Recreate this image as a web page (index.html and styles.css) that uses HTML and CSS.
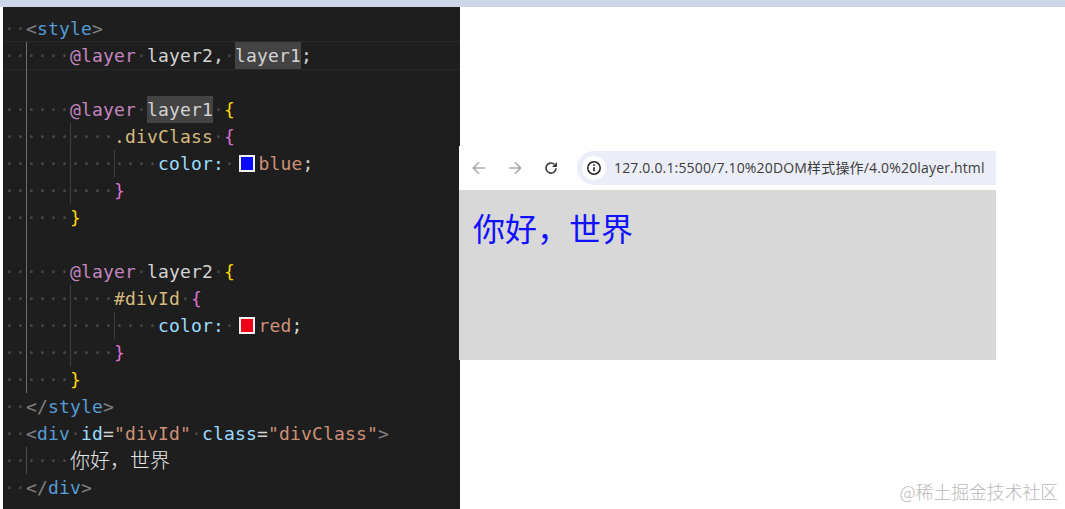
FILE: index.html
```html
<!DOCTYPE html>
<html lang="zh">
<head>
<meta charset="utf-8">
<title>layer</title>
<link rel="stylesheet" href="styles.css">
</head>
<body>
<div class="shot">
  <div class="editor">
    <div class="line"><span class="ws">··</span><span class="p">&lt;</span><span class="tag">style</span><span class="p">&gt;</span></div>
    <div class="line active"><span class="ws">··</span><span class="g1">····</span><span class="at">@layer</span><span class="ws">·</span><span class="id">layer2,</span><span class="ws">·</span><span class="id sel">layer1</span><span class="id">;</span></div>
    <div class="line"><span class="ws">  </span><span class="g1">&nbsp;</span></div>
    <div class="line"><span class="ws">··</span><span class="g1">····</span><span class="at">@layer</span><span class="ws">·</span><span class="id sel">layer1</span><span class="ws">·</span><span class="b1">{</span></div>
    <div class="line"><span class="ws">··</span><span class="g1">····</span><span class="g2">····</span><span class="sl">.divClass</span><span class="ws">·</span><span class="b2">{</span></div>
    <div class="line"><span class="ws">··</span><span class="g1">····</span><span class="g2">····</span><span class="g2">····</span><span class="prop">color:</span><span class="ws">·</span><span class="swatch"><i class="chip blue"></i></span><span class="val">blue</span><span class="id">;</span></div>
    <div class="line"><span class="ws">··</span><span class="g1">····</span><span class="g2">····</span><span class="b2">}</span></div>
    <div class="line"><span class="ws">··</span><span class="g1">····</span><span class="b1">}</span></div>
    <div class="line"><span class="ws">  </span><span class="g1">&nbsp;</span></div>
    <div class="line"><span class="ws">··</span><span class="g1">····</span><span class="at">@layer</span><span class="ws">·</span><span class="id">layer2</span><span class="ws">·</span><span class="b1">{</span></div>
    <div class="line"><span class="ws">··</span><span class="g1">····</span><span class="g2">····</span><span class="sl">#divId</span><span class="ws">·</span><span class="b2">{</span></div>
    <div class="line"><span class="ws">··</span><span class="g1">····</span><span class="g2">····</span><span class="g2">····</span><span class="prop">color:</span><span class="ws">·</span><span class="swatch"><i class="chip red"></i></span><span class="val">red</span><span class="id">;</span></div>
    <div class="line"><span class="ws">··</span><span class="g1">····</span><span class="g2">····</span><span class="b2">}</span></div>
    <div class="line"><span class="ws">··</span><span class="g1">····</span><span class="b1">}</span></div>
    <div class="line"><span class="ws">··</span><span class="p">&lt;/</span><span class="tag">style</span><span class="p">&gt;</span></div>
    <div class="line"><span class="ws">··</span><span class="p">&lt;</span><span class="tag">div</span><span class="ws">·</span><span class="prop">id</span><span class="id">=</span><span class="val">"divId"</span><span class="ws">·</span><span class="prop">class</span><span class="id">=</span><span class="val">"divClass"</span><span class="p">&gt;</span></div>
    <div class="line"><span class="ws">··</span><span class="g2 g1b">····</span><span class="cjk">你好，世界</span></div>
    <div class="line"><span class="ws">··</span><span class="p">&lt;/</span><span class="tag">div</span><span class="p">&gt;</span></div>
  </div>
  <div class="side">
    <div class="browser">
      <div class="toolbar">
        <svg class="nav" width="16" height="16" viewBox="0 0 16 16" fill="none" stroke="#a9a9a9" stroke-width="1.6"><path d="M14 8H2.5M8 2.3 2.3 8 8 13.7"/></svg>
        <svg class="nav" width="16" height="16" viewBox="0 0 16 16" fill="none" stroke="#a9a9a9" stroke-width="1.6"><path d="M2 8h11.5M8 2.3 13.7 8 8 13.7"/></svg>
        <svg class="nav" width="16" height="16" viewBox="0 0 16 16" fill="none"><path d="M13 8.2A5 5 0 1 1 11.4 4.4" stroke="#3c3c3c" stroke-width="1.6"/><path d="M14 2v5H9z" fill="#3c3c3c"/></svg>
        <div class="address">
          <span class="info"><svg width="16" height="16" viewBox="0 0 16 16" fill="none"><circle cx="8" cy="8" r="6.2" stroke="#222" stroke-width="1.5"/><path d="M8 7.2v4" stroke="#222" stroke-width="1.6"/><path d="M8 4.3v1.7" stroke="#222" stroke-width="1.6"/></svg></span>
          <span class="url">127.0.0.1:5500/7.10%20DOM样式操作/4.0%20layer.html</span>
        </div>
      </div>
      <div class="page">你好，世界</div>
    </div>
    <div class="mark">@稀土掘金技术社区</div>
  </div>
</div>
</body>
</html>
```
FILE: styles.css
```css
* { box-sizing: border-box; }
html, body { margin: 0; height: 100%; background: #fff; overflow: hidden; }
.shot {
  width: 1065px;
  height: 509px;
  display: flex;
  align-items: stretch;
  border-top: 7px solid #ccd6e8;
  background: #fff;
}
.editor {
  width: 457px;
  margin-left: 3px;
  flex: none;
  padding: 8px 0 0 1px;
  background: #1e1e1e;
  font-family: "DejaVu Sans Mono", monospace;
  font-size: 18px;
  letter-spacing: 0.16px;
  color: #d4d4d4;
}
.line {
  height: 27px;
  line-height: 27px;
  white-space: pre;
  display: flex;
  align-items: stretch;
}
.line span { display: block; }
.active { box-shadow: 0 -1px 0 #282828, 0 1px 0 #282828; }
.ws, .g1, .g2 { color: #4a4a4a; }
.g1 { box-shadow: inset 1px 0 0 #6f6f6f; }
.g2 { box-shadow: inset 1px 0 0 #404040; }
.g1b { box-shadow: inset 1px 0 0 #505050; }
.p { color: #808080; }
.tag { color: #569cd6; }
.at { color: #c586c0; }
.id { color: #d4d4d4; }
.sel { background: #434343; }
.sl { color: #d7ba7d; }
.prop { color: #9cdcfe; }
.val { color: #ce9178; }
.b1 { color: #ffd700; }
.b2 { color: #da70d6; }
.cjk { font-family: "Noto Sans CJK SC", sans-serif; font-size: 20px; font-weight: 300; letter-spacing: 0; line-height: 25px; color: #e6e6e6; }
.swatch { width: 23.5px; display: flex !important; align-items: center; justify-content: center; }
.chip { display: block; width: 16px; height: 17px; border: 2px solid #f2f2f2; }
.blue { background: #0a0aff; }
.red { background: #f00018; }
.side {
  flex: 1;
  position: relative;
  margin-left: -1px;
  padding-top: 139px;
}
.browser { width: 537px; }
.toolbar {
  height: 44px;
  display: flex;
  align-items: center;
  padding-left: 12px;
  gap: 20px;
  background: #fff;
}
.nav { flex: none; }
.address {
  flex: 1;
  height: 34px;
  margin-left: -2px;
  display: flex;
  align-items: center;
  padding-left: 5px;
  gap: 8px;
  background: #ebeef8;
  border-radius: 17px 0 0 17px;
}
.info {
  width: 24px;
  height: 24px;
  border-radius: 50%;
  background: #fff;
  display: flex;
  align-items: center;
  justify-content: center;
}
.url {
  font-family: "Open Sans", "Noto Sans CJK SC", sans-serif;
  font-size: 14px;
  letter-spacing: 0.17px;
  line-height: 30px;
  color: #3c3c3c;
  white-space: nowrap;
}
.page {
  height: 170px;
  padding: 14px 14px;
  background: #d8d8d8;
  color: #1010ff;
  font-family: "Noto Sans CJK SC", sans-serif;
  font-size: 32px;
  font-weight: 400;
  line-height: 46px;
}
.mark {
  position: absolute;
  right: 7px;
  bottom: 5px;
  font-family: "Noto Sans CJK SC", sans-serif;
  font-size: 17.8px;
  font-weight: 300;
  color: #b8b8b8;
}
```
